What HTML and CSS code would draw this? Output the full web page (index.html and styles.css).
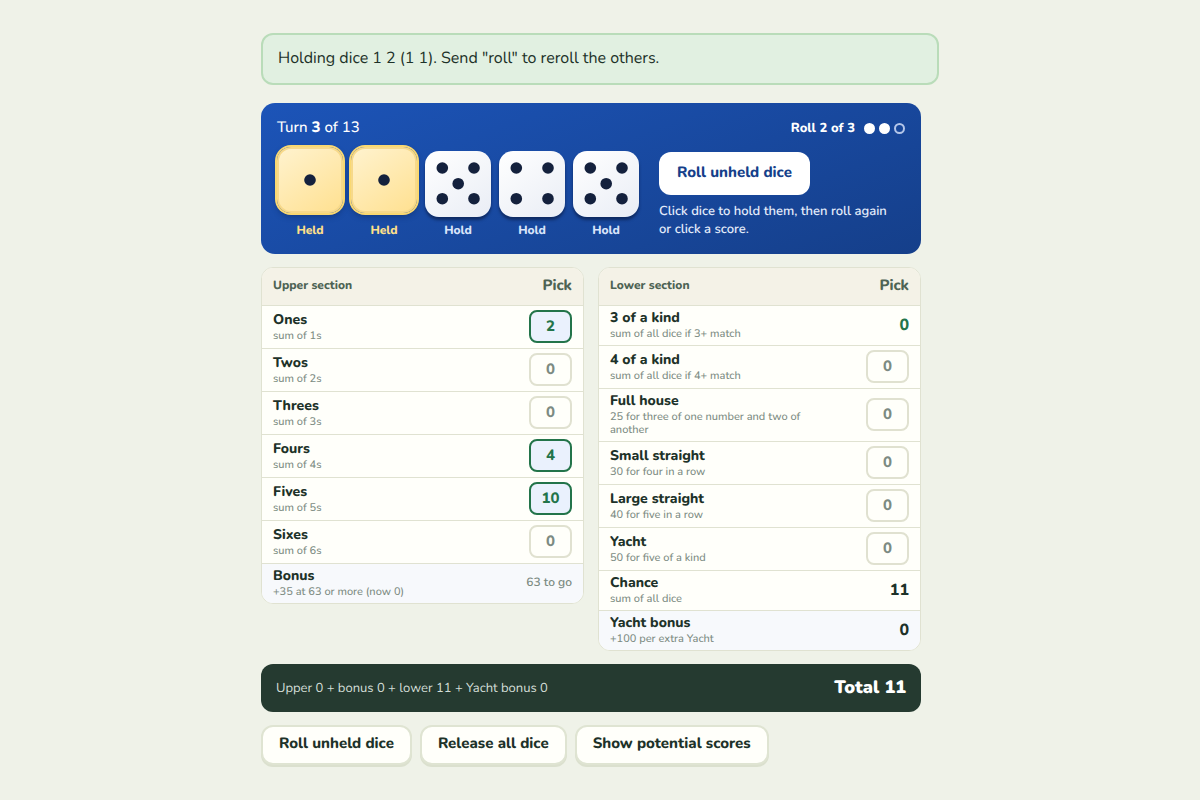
FILE: index.html
```html
<!DOCTYPE html>
<html lang="en">
<head>
  <meta charset="UTF-8">
  <meta name="viewport" content="width=device-width, initial-scale=1.0">
  <title>Yacht</title>
  <link rel="stylesheet" href="styles.css">
</head>
<body>
  <main class="page">
    <p class="message" role="status">Holding dice 1 2 (1 1). Send "roll" to reroll the others.</p>

    <div class="game">
      <!-- Dice tray -->
      <section class="tray">
        <div class="tray-head">
          <div class="turn">Turn <strong>3</strong> of 13</div>
          <div class="rolls">
            <span>Roll 2 of 3</span>
            <span class="roll-dots"><i class="used"></i><i class="used"></i><i></i></span>
          </div>
        </div>
        <div class="tray-body">
          <div class="dice">
            <button class="die-slot held" type="button">
              <svg class="die" viewBox="0 0 66 66"><circle cx="33" cy="33" r="6.2"/></svg>
              <span>Held</span>
            </button>
            <button class="die-slot held" type="button">
              <svg class="die" viewBox="0 0 66 66"><circle cx="33" cy="33" r="6.2"/></svg>
              <span>Held</span>
            </button>
            <button class="die-slot" type="button">
              <svg class="die" viewBox="0 0 66 66"><circle cx="17.3" cy="17" r="5.8"/><circle cx="49" cy="17" r="5.8"/><circle cx="33.2" cy="32.7" r="5.8"/><circle cx="17.3" cy="47.7" r="5.8"/><circle cx="49" cy="47.7" r="5.8"/></svg>
              <span>Hold</span>
            </button>
            <button class="die-slot" type="button">
              <svg class="die" viewBox="0 0 66 66"><circle cx="17.3" cy="17" r="5.8"/><circle cx="49" cy="17" r="5.8"/><circle cx="17.3" cy="47.7" r="5.8"/><circle cx="49" cy="47.7" r="5.8"/></svg>
              <span>Hold</span>
            </button>
            <button class="die-slot" type="button">
              <svg class="die" viewBox="0 0 66 66"><circle cx="17.3" cy="17" r="5.8"/><circle cx="49" cy="17" r="5.8"/><circle cx="33.2" cy="32.7" r="5.8"/><circle cx="17.3" cy="47.7" r="5.8"/><circle cx="49" cy="47.7" r="5.8"/></svg>
              <span>Hold</span>
            </button>
          </div>
          <div class="controls">
            <button class="roll-button" type="button">Roll unheld dice</button>
            <p class="hint">Click dice to hold them, then roll again or click a score.</p>
          </div>
        </div>
      </section>

      <!-- Score card -->
      <div class="sections">
        <div class="card">
          <table class="scores">
            <thead>
              <tr><th scope="col">Upper section</th><th scope="col" class="pick">Pick</th></tr>
            </thead>
            <tbody>
              <tr><th scope="row">Ones<small>sum of 1s</small></th><td><button class="score good" type="button">2</button></td></tr>
              <tr><th scope="row">Twos<small>sum of 2s</small></th><td><button class="score" type="button">0</button></td></tr>
              <tr><th scope="row">Threes<small>sum of 3s</small></th><td><button class="score" type="button">0</button></td></tr>
              <tr><th scope="row">Fours<small>sum of 4s</small></th><td><button class="score good" type="button">4</button></td></tr>
              <tr><th scope="row">Fives<small>sum of 5s</small></th><td><button class="score good" type="button">10</button></td></tr>
              <tr><th scope="row">Sixes<small>sum of 6s</small></th><td><button class="score" type="button">0</button></td></tr>
              <tr class="bonus"><th scope="row">Bonus<small>+35 at 63 or more (now 0)</small></th><td class="to-go">63 to go</td></tr>
            </tbody>
          </table>
        </div>
        <div class="card">
          <table class="scores">
            <thead>
              <tr><th scope="col">Lower section</th><th scope="col" class="pick">Pick</th></tr>
            </thead>
            <tbody>
              <tr><th scope="row">3 of a kind<small>sum of all dice if 3+ match</small></th><td class="latest">0</td></tr>
              <tr><th scope="row">4 of a kind<small>sum of all dice if 4+ match</small></th><td><button class="score" type="button">0</button></td></tr>
              <tr><th scope="row">Full house<small>25 for three of one number and two of another</small></th><td><button class="score" type="button">0</button></td></tr>
              <tr><th scope="row">Small straight<small>30 for four in a row</small></th><td><button class="score" type="button">0</button></td></tr>
              <tr><th scope="row">Large straight<small>40 for five in a row</small></th><td><button class="score" type="button">0</button></td></tr>
              <tr><th scope="row">Yacht<small>50 for five of a kind</small></th><td><button class="score" type="button">0</button></td></tr>
              <tr><th scope="row">Chance<small>sum of all dice</small></th><td>11</td></tr>
              <tr class="bonus"><th scope="row">Yacht bonus<small>+100 per extra Yacht</small></th><td>0</td></tr>
            </tbody>
          </table>
        </div>
      </div>

      <div class="total">
        <span>Upper 0 + bonus 0 + lower 11 + Yacht bonus 0</span>
        <strong>Total 11</strong>
      </div>

      <div class="actions">
        <button type="button">Roll unheld dice</button>
        <button type="button">Release all dice</button>
        <button type="button">Show potential scores</button>
      </div>
    </div>
  </main>
</body>
</html>
```

FILE: styles.css
```css
* {
  box-sizing: border-box;
}
body {
  margin: 0;
  padding: 33px 16px;
  background: #eff2e8;
  color: #1d3229;
  font-family: Nunito, Lato, "Open Sans", sans-serif;
  font-size: 16px;
  text-rendering: geometricPrecision;
}
button {
  font: inherit;
  text-rendering: inherit;
  cursor: pointer;
}
.page {
  max-width: 678px;
  margin: 0 auto;
}
.message {
  margin: 0 0 18px;
  padding: 12px 15px 14px;
  border: 2px solid #b9dcb9;
  border-radius: 12px;
  background: #e1f0e1;
  line-height: 22px;
}
.game {
  max-width: 660px;
}

/* Dice tray */
.tray {
  padding: 13px 16px 15px;
  border-radius: 14px;
  background: linear-gradient(160deg, #1c54b8, #153f8a);
  color: #fff;
}
.tray-head,
.rolls,
.roll-dots,
.total {
  display: flex;
  align-items: center;
}
.tray-head {
  justify-content: space-between;
  line-height: 24px;
}
.turn {
  font-size: 15px;
  font-weight: 500;
}
.turn strong {
  font-weight: 800;
}
.rolls {
  gap: 9px;
  font-size: 13px;
  font-weight: 800;
}
.roll-dots {
  gap: 4px;
}
.roll-dots i {
  width: 11px;
  height: 11px;
  border: 2px solid #b4c6e9;
  border-radius: 50%;
}
.roll-dots .used {
  border-color: #fff;
  background: #fff;
}
.tray-body {
  display: flex;
  gap: 16px;
  margin-top: 11px;
}
.dice {
  display: flex;
  gap: 8px;
}
.die-slot {
  display: flex;
  flex-direction: column;
  gap: 6px;
  padding: 0;
  border: none;
  background: none;
  color: #d9e4fa;
  font-size: 12px;
  font-weight: 800;
  line-height: 16px;
  text-align: center;
}
.die-slot span {
  width: 100%;
}
.die {
  width: 66px;
  height: 66px;
  border-radius: 14px;
  background: linear-gradient(145deg, #fff, #e9edf5);
  box-shadow: 0 3px 3px rgba(8, 24, 60, 0.6);
  fill: #14213d;
}
.held {
  color: #ffe08a;
}
.held .die {
  border: 2px solid #f7d98a;
  background: linear-gradient(145deg, #fff3d0, #ffe08f) border-box;
  box-shadow: 0 0 0 2px #f9d872, 0 3px 6px rgba(8, 24, 60, 0.4);
  transform: translateY(-4px);
}
.controls {
  flex: 1;
  padding: 1px 12px 0 4px;
}
.roll-button {
  height: 43px;
  padding: 0 18px 2px;
  border: none;
  border-radius: 12px;
  background: #fff;
  color: #153f8a;
  font-size: 15px;
  font-weight: 800;
}
.hint {
  margin: 7px 0 0;
  color: #e3ebfa;
  font-size: 13px;
  font-weight: 600;
  line-height: 18px;
}

/* Score card */
.sections {
  display: grid;
  grid-template-columns: 1fr 1fr;
  gap: 14px;
  align-items: start;
  margin-top: 13px;
}
.card {
  overflow: hidden;
  border: 1px solid #e0e2d1;
  border-radius: 12px;
  background: #fffffa;
}
.scores {
  width: 100%;
  border-collapse: separate;
  border-spacing: 0;
}
.scores th {
  padding: 2px 11px 5px;
  text-align: left;
  font-size: 14px;
  font-weight: 800;
  line-height: 19px;
}
.scores td {
  width: 66px;
  padding: 4px 11px 5px;
  text-align: right;
  font-weight: 800;
  line-height: 20px;
  white-space: nowrap;
}
.scores tbody th,
.scores tbody td {
  border-top: 1px solid #e0e2d1;
}
.scores thead th {
  height: 37px;
  padding: 4px 11px;
  background: #f4f2e7;
  color: #4d6354;
  font-size: 12px;
}
.scores thead .pick {
  font-size: 15px;
  text-align: right;
}
.scores small {
  display: block;
  max-width: 210px;
  color: #7c8b82;
  font-size: 11px;
  font-weight: 500;
  line-height: 13px;
}
.scores .bonus th,
.scores .bonus td {
  background: #f7f9fc;
}
.scores .to-go {
  color: #7c8b82;
  font-size: 12px;
  font-weight: 600;
}
.scores .latest {
  color: #23744a;
}
.score {
  display: block;
  width: 43px;
  height: 33px;
  margin-left: auto;
  padding: 0;
  border: 2px solid #e0e1d0;
  border-radius: 8px;
  background: #fffffa;
  color: #7c8b82;
  font-size: 15px;
}
.score.good {
  border-color: #23744a;
  background: #eaf1fd;
  color: #23744a;
}

.total {
  justify-content: space-between;
  height: 48px;
  margin-top: 13px;
  padding: 0 15px;
  border-radius: 12px;
  background: #253a30;
  color: #d3ded7;
  font-size: 13px;
}
.total strong {
  color: #fff;
  font-size: 18px;
  font-weight: 900;
}
.actions {
  display: flex;
  flex-wrap: wrap;
  gap: 8px;
  margin-top: 13px;
}
.actions button {
  height: 40px;
  padding: 0 16px 2px;
  border: 2px solid #dfe4d2;
  border-radius: 12px;
  background: #fffffa;
  box-shadow: 0 2px 0 #dbe0ce;
  color: #1d3229;
  font-size: 15px;
  font-weight: 800;
}
```
